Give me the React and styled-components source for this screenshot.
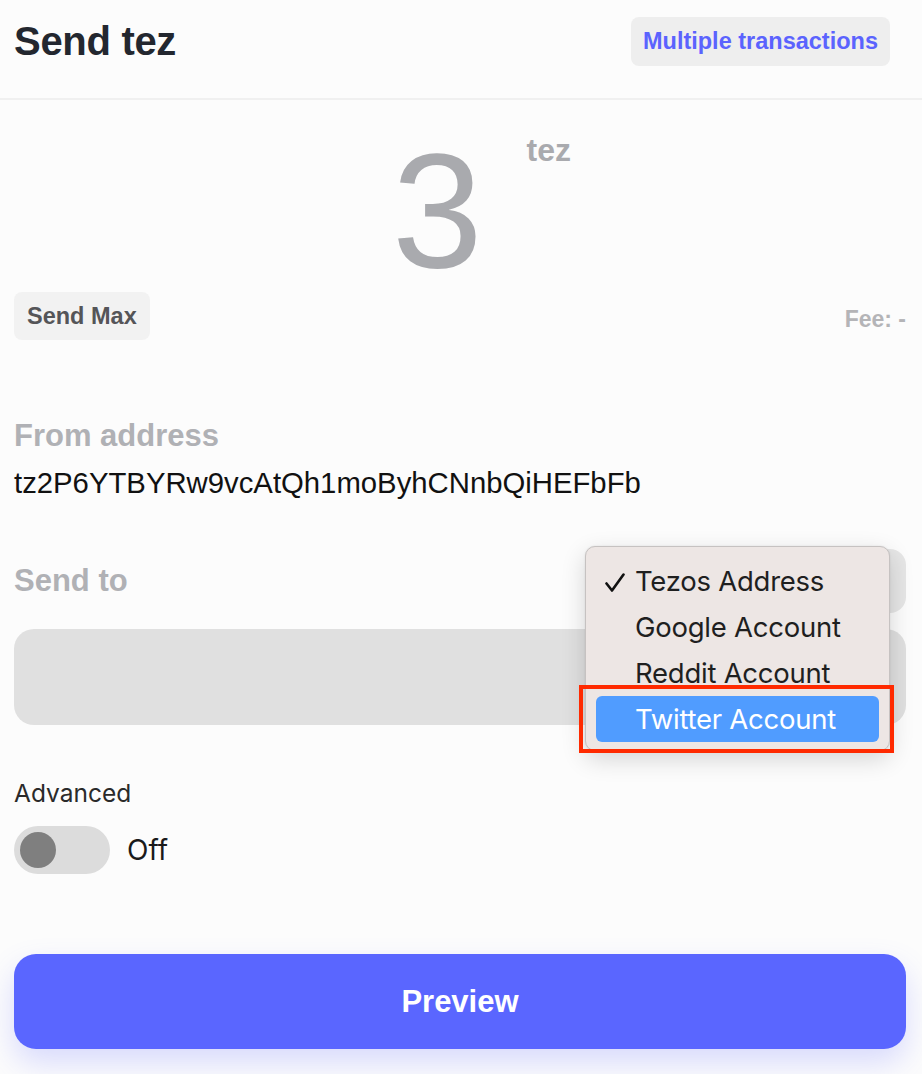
import React from "react";
import styled, { createGlobalStyle } from "styled-components";

const Global = createGlobalStyle`
  html, body { margin: 0; padding: 0; background: #fcfcfc; }
  body { font-family: "Liberation Sans", Arial, sans-serif; }
  * { box-sizing: border-box; }
`;

const Page = styled.div`
  width: 922px;
  min-height: 1074px;
  background: #fcfcfc;
  display: flex;
  flex-direction: column;
`;

const Header = styled.header`
  height: 100px;
  padding: 0 32px 16px 14px;
  border-bottom: 2px solid #f0f0f0;
  display: flex;
  align-items: center;
  justify-content: space-between;
`;

const Title = styled.h1`
  margin: 0;
  font-size: 40px;
  font-weight: 700;
  color: #23272f;
  letter-spacing: -0.3px;
`;

const PillButton = styled.button`
  height: 49px;
  padding: 0 12px;
  border: none;
  border-radius: 8px;
  background: #eeeeee;
  color: ${(p) => p.$color || "#555"};
  font-family: "Liberation Sans", Arial, sans-serif;
  font-weight: 700;
  font-size: 23.5px;
  cursor: pointer;
`;

const Body = styled.main`
  padding: 0 16px 0 14px;
  display: flex;
  flex-direction: column;
`;

const AmountRow = styled.div`
  margin-top: 29px;
  padding-left: 43px;
  height: 163px;
  display: flex;
  justify-content: center;
  align-items: flex-start;
  gap: 44px;
`;

const AmountValue = styled.div`
  font-size: 163px;
  line-height: 1;
  font-weight: 400;
  color: #a9aaae;
`;

const Unit = styled.div`
  margin-top: 5px;
  font-size: 32px;
  line-height: 1;
  font-weight: 700;
  color: #a9aaae;
`;

const ActionsRow = styled.div`
  height: 48px;
  display: flex;
  align-items: center;
  justify-content: space-between;
`;

const SmallButton = styled(PillButton)`
  height: 48px;
  padding: 0 13px;
  background: #f2f2f2;
  color: #555558;
`;

const Fee = styled.span`
  padding-top: 6px;
  font-size: 23px;
  font-weight: 700;
  color: #b4b4b7;
`;

const Label = styled.div`
  margin-top: ${(p) => p.$mt || 0}px;
  font-size: 31px;
  line-height: 36px;
  font-weight: 700;
  color: #b0b1b5;
`;

const Address = styled.div`
  margin-top: 12px;
  font-size: 29.3px;
  line-height: 34.8px;
  color: #111;
`;

const SendRow = styled.div`
  position: relative;
  margin-top: 48px;
  height: 64px;
  display: flex;
  align-items: center;
  justify-content: space-between;
`;

const SelectBox = styled.div`
  width: 300px;
  height: 64px;
  border-radius: 16px;
  background: #e6e6e6;
`;

const Input = styled.div`
  margin-top: 16px;
  height: 96px;
  border-radius: 20px;
  background: #e0e0e0;
`;

const Menu = styled.ul`
  position: absolute;
  left: 571px;
  top: -3px;
  width: 305px;
  margin: 0;
  padding: 11px 10px 8px;
  list-style: none;
  background: #ede6e4;
  border: 1px solid #c6c2c1;
  border-radius: 10px;
  box-shadow: 0 8px 24px rgba(0, 0, 0, 0.16), 0 0 2px rgba(0, 0, 0, 0.1);
  font-family: Inter, "Noto Sans", sans-serif;
  z-index: 5;
`;

const MenuItem = styled.li`
  position: relative;
  height: 46px;
  padding-left: 39px;
  display: flex;
  align-items: center;
  border-radius: 6px;
  font-size: 27.5px;
  letter-spacing: -0.25px;
  color: ${(p) => (p.$active ? "#ffffff" : "#1f1f1f")};
  background: ${(p) => (p.$active ? "#509cff" : "transparent")};
`;

const Check = styled.svg`
  position: absolute;
  left: 9px;
  top: 15px;
  width: 20px;
  height: 19px;
`;

const Highlight = styled.div`
  position: absolute;
  left: -7px;
  top: 138px;
  width: 315px;
  height: 68px;
  border: 4px solid #ff2a00;
  pointer-events: none;
`;

const SmallLabel = styled.div`
  margin-top: 55px;
  font-family: Inter, "Noto Sans", sans-serif;
  font-size: 24.5px;
  line-height: 27.6px;
  color: #2a2a2a;
`;

const ToggleRow = styled.div`
  margin-top: 19px;
  display: flex;
  align-items: center;
  gap: 17px;
`;

const Track = styled.div`
  width: 96px;
  height: 48px;
  border-radius: 24px;
  background: #dcdcdc;
  padding: 6px;
  display: flex;
  align-items: center;
`;

const Knob = styled.div`
  width: 36px;
  height: 36px;
  border-radius: 50%;
  background: #7f7f7f;
`;

const ToggleText = styled.span`
  font-family: Inter, "Noto Sans", sans-serif;
  font-size: 28px;
  color: #1a1a1a;
`;

const Primary = styled.button`
  margin-top: 80px;
  height: 95px;
  border: none;
  border-radius: 22px;
  background: #5a66ff;
  color: #fff;
  font-family: "Liberation Sans", Arial, sans-serif;
  font-size: 31px;
  font-weight: 700;
  box-shadow: 0 14px 30px rgba(90, 102, 255, 0.22);
  cursor: pointer;
`;

export default function App() {
  const options = ["Tezos Address", "Google Account", "Reddit Account", "Twitter Account"];
  return (
    <Page>
      <Global />
      <Header>
        <Title>Send tez</Title>
        <PillButton $color="#5b63fe">Multiple transactions</PillButton>
      </Header>
      <Body>
        <AmountRow>
          <AmountValue>3</AmountValue>
          <Unit>tez</Unit>
        </AmountRow>
        <ActionsRow>
          <SmallButton>Send Max</SmallButton>
          <Fee>Fee: -</Fee>
        </ActionsRow>
        <Label $mt={78}>From address</Label>
        <Address>tz2P6YTBYRw9vcAtQh1moByhCNnbQiHEFbFb</Address>
        <SendRow>
          <Label>Send to</Label>
          <SelectBox />
          <Menu>
            {options.map((o, i) => (
              <MenuItem key={o} $active={i === 3}>
                {i === 0 && (
                  <Check viewBox="0 0 20 19">
                    <path
                      d="M1.5 10.5 L7 17.5 L18.5 1.5"
                      fill="none"
                      stroke="#111"
                      strokeWidth="2.6"
                      strokeLinecap="round"
                      strokeLinejoin="round"
                    />
                  </Check>
                )}
                {o}
              </MenuItem>
            ))}
            <Highlight />
          </Menu>
        </SendRow>
        <Input />
        <SmallLabel>Advanced</SmallLabel>
        <ToggleRow>
          <Track>
            <Knob />
          </Track>
          <ToggleText>Off</ToggleText>
        </ToggleRow>
        <Primary>Preview</Primary>
      </Body>
    </Page>
  );
}
